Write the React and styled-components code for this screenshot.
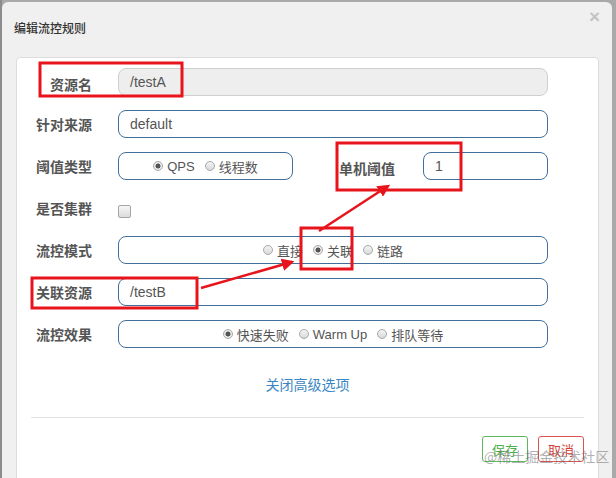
import React from 'react'
import styled, { createGlobalStyle } from 'styled-components'

const GlobalStyle = createGlobalStyle`
  html, body {
    margin: 0;
    padding: 0;
    background: #8c8c8c;
  }
  body {
    font-family: "Liberation Sans", "Noto Sans CJK SC", sans-serif;
  }
`

const Page = styled.div`
  position: relative;
  width: 616px;
  height: 478px;
  overflow: hidden;
  padding: 2px 4px 0 2px;
  box-sizing: border-box;
  background: linear-gradient(to right, #8c8c8c 0 2px, transparent 2px), #a9a9a9;
`

const Modal = styled.div`
  width: 610px;
  height: 490px;
  background: #f0f0f0;
  border-radius: 6px 6px 0 0;
  display: flex;
  flex-direction: column;
`

const Header = styled.div`
  height: 55px;
  display: flex;
  align-items: center;
  justify-content: space-between;
  padding: 0 12px 0 12px;
  box-sizing: border-box;
`

const Title = styled.h4`
  margin: 0;
  margin-top: -4px;
  font-family: "Noto Sans CJK SC", sans-serif;
  font-size: 12px;
  font-weight: 500;
  color: #333;
`

const Close = styled.span`
  align-self: flex-start;
  margin-top: 5px;
  font-size: 19px;
  line-height: 1;
  font-weight: 700;
  color: #c4c4c4;
`

const Panel = styled.div`
  margin: 0 13px 0 14px;
  background: #fff;
  border: 1px solid #dcdcdc;
  border-radius: 4px;
  padding: 10px 50px 0 0;
  flex: 1;
`

const Row = styled.div`
  display: flex;
  align-items: center;
  height: 28px;
  margin-bottom: 14px;
`

const Label = styled.label`
  width: ${p => p.$w || 75}px;
  margin-right: ${p => p.$gap || 26}px;
  text-align: right;
  flex-shrink: 0;
  font-family: "Noto Sans CJK SC", sans-serif;
  font-size: 14px;
  font-weight: 700;
  color: #555;
  padding-top: ${p => p.$down || 0}px;
  box-sizing: border-box;
`

const Input = styled.div`
  width: ${p => p.$w || 430}px;
  height: 28px;
  box-sizing: border-box;
  border: 1px solid ${p => (p.$disabled ? '#cfcfcf' : '#416f99')};
  background: ${p => (p.$disabled ? '#eeeeee' : '#fff')};
  border-radius: 8px;
  padding: 0 11px;
  display: flex;
  align-items: center;
  font-size: 14px;
  color: #555;
  flex-shrink: 0;
`

const RadioBox = styled(Input)`
  justify-content: center;
  gap: 10px;
  font-size: 13px;
  padding: 0;
`

const Choice = styled.span`
  display: inline-flex;
  align-items: center;
  gap: 4px;
  color: #555;
  font-family: "Liberation Sans", "Noto Sans CJK SC", sans-serif;
`

const Radio = styled.span`
  width: 10px;
  height: 10px;
  border-radius: 50%;
  box-sizing: border-box;
  border: 1px solid #a8a8a8;
  background: ${p =>
    p.$on
      ? 'radial-gradient(circle, #555 0 2.2px, #eaeaea 2.8px)'
      : 'linear-gradient(#f4f4f4, #d8d8d8)'};
`

const Checkbox = styled.span`
  width: 11px;
  height: 11px;
  margin-top: 6px;
  border: 1px solid #a5a5a5;
  border-radius: 2px;
  background: linear-gradient(#f6f6f6, #dcdcdc);
`

const LinkRow = styled.div`
  margin: 26px 0 0 50px;
  text-align: center;
  line-height: 20px;
  font-family: "Noto Sans CJK SC", sans-serif;
  font-size: 14px;
  color: #3a86c4;
`

const Divider = styled.hr`
  margin: 23px -36px 0 14px;
  border: 0;
  border-top: 1px solid #e3e3e3;
`

const Footer = styled.div`
  display: flex;
  justify-content: flex-end;
  gap: 10px;
  margin: 18px -36px 0 0;
`

const Button = styled.span`
  width: 46px;
  height: 26px;
  box-sizing: border-box;
  border: 1px solid ${p => p.$border};
  border-radius: 3px;
  color: ${p => p.$color};
  display: flex;
  align-items: center;
  justify-content: center;
  font-family: "Noto Sans CJK SC", sans-serif;
  font-size: 13px;
  background: #fff;
`

const Watermark = styled.div`
  position: absolute;
  left: 484px;
  top: 446px;
  font-family: "Noto Sans CJK SC", sans-serif;
  font-size: 14px;
  color: rgba(110, 110, 110, 0.55);
  pointer-events: none;
  white-space: nowrap;
`

const Marks = styled.svg`
  position: absolute;
  left: 0;
  top: 0;
  pointer-events: none;
`

const Group = ({ items, on, w }) => (
  <RadioBox $w={w}>
    {items.map(t => (
      <Choice key={t}>
        <Radio $on={t === on} />
        {t}
      </Choice>
    ))}
  </RadioBox>
)

export default function App() {
  return (
    <Page>
      <GlobalStyle />
      <Modal>
        <Header>
          <Title>编辑流控规则</Title>
          <Close>×</Close>
        </Header>
        <Panel>
          <Row>
            <Label $down={4}>资源名</Label>
            <Input $disabled>/testA</Input>
          </Row>
          <Row>
            <Label>针对来源</Label>
            <Input>default</Input>
          </Row>
          <Row>
            <Label>阈值类型</Label>
            <Group items={['QPS', '线程数']} on="QPS" w={175} />
            <Label $w={102} $gap={28} $down={4}>单机阈值</Label>
            <Input $w={125}>1</Input>
          </Row>
          <Row>
            <Label>是否集群</Label>
            <Checkbox />
          </Row>
          <Row>
            <Label>流控模式</Label>
            <Group items={['直接', '关联', '链路']} on="关联" />
          </Row>
          <Row>
            <Label>关联资源</Label>
            <Input>/testB</Input>
          </Row>
          <Row>
            <Label>流控效果</Label>
            <Group items={['快速失败', 'Warm Up', '排队等待']} on="快速失败" />
          </Row>
          <LinkRow>关闭高级选项</LinkRow>
          <Divider />
          <Footer>
            <Button $border="#5cb85c" $color="#4cae4c">保存</Button>
            <Button $border="#d9534f" $color="#d43f3a">取消</Button>
          </Footer>
        </Panel>
      </Modal>
      <Watermark>@稀土掘金技术社区</Watermark>
      <Marks width="616" height="478" viewBox="0 0 616 478">
        <defs>
          <marker id="head" viewBox="0 0 10 10" refX="8" refY="5" markerWidth="5" markerHeight="5" orient="auto">
            <path d="M0 0 L10 5 L0 10 z" fill="#e8141c" />
          </marker>
        </defs>
        <g fill="none" stroke="#e8141c" strokeWidth="3">
          <rect x="40" y="63" width="142" height="33" />
          <rect x="337" y="143" width="124" height="47" />
          <rect x="301" y="228" width="51" height="41" />
          <rect x="32" y="278" width="165" height="30" />
        </g>
        <g stroke="#e8141c" strokeWidth="2.5" markerEnd="url(#head)">
          <line x1="201" y1="288" x2="292" y2="262" />
          <line x1="319" y1="231" x2="388" y2="186" />
        </g>
      </Marks>
    </Page>
  )
}
